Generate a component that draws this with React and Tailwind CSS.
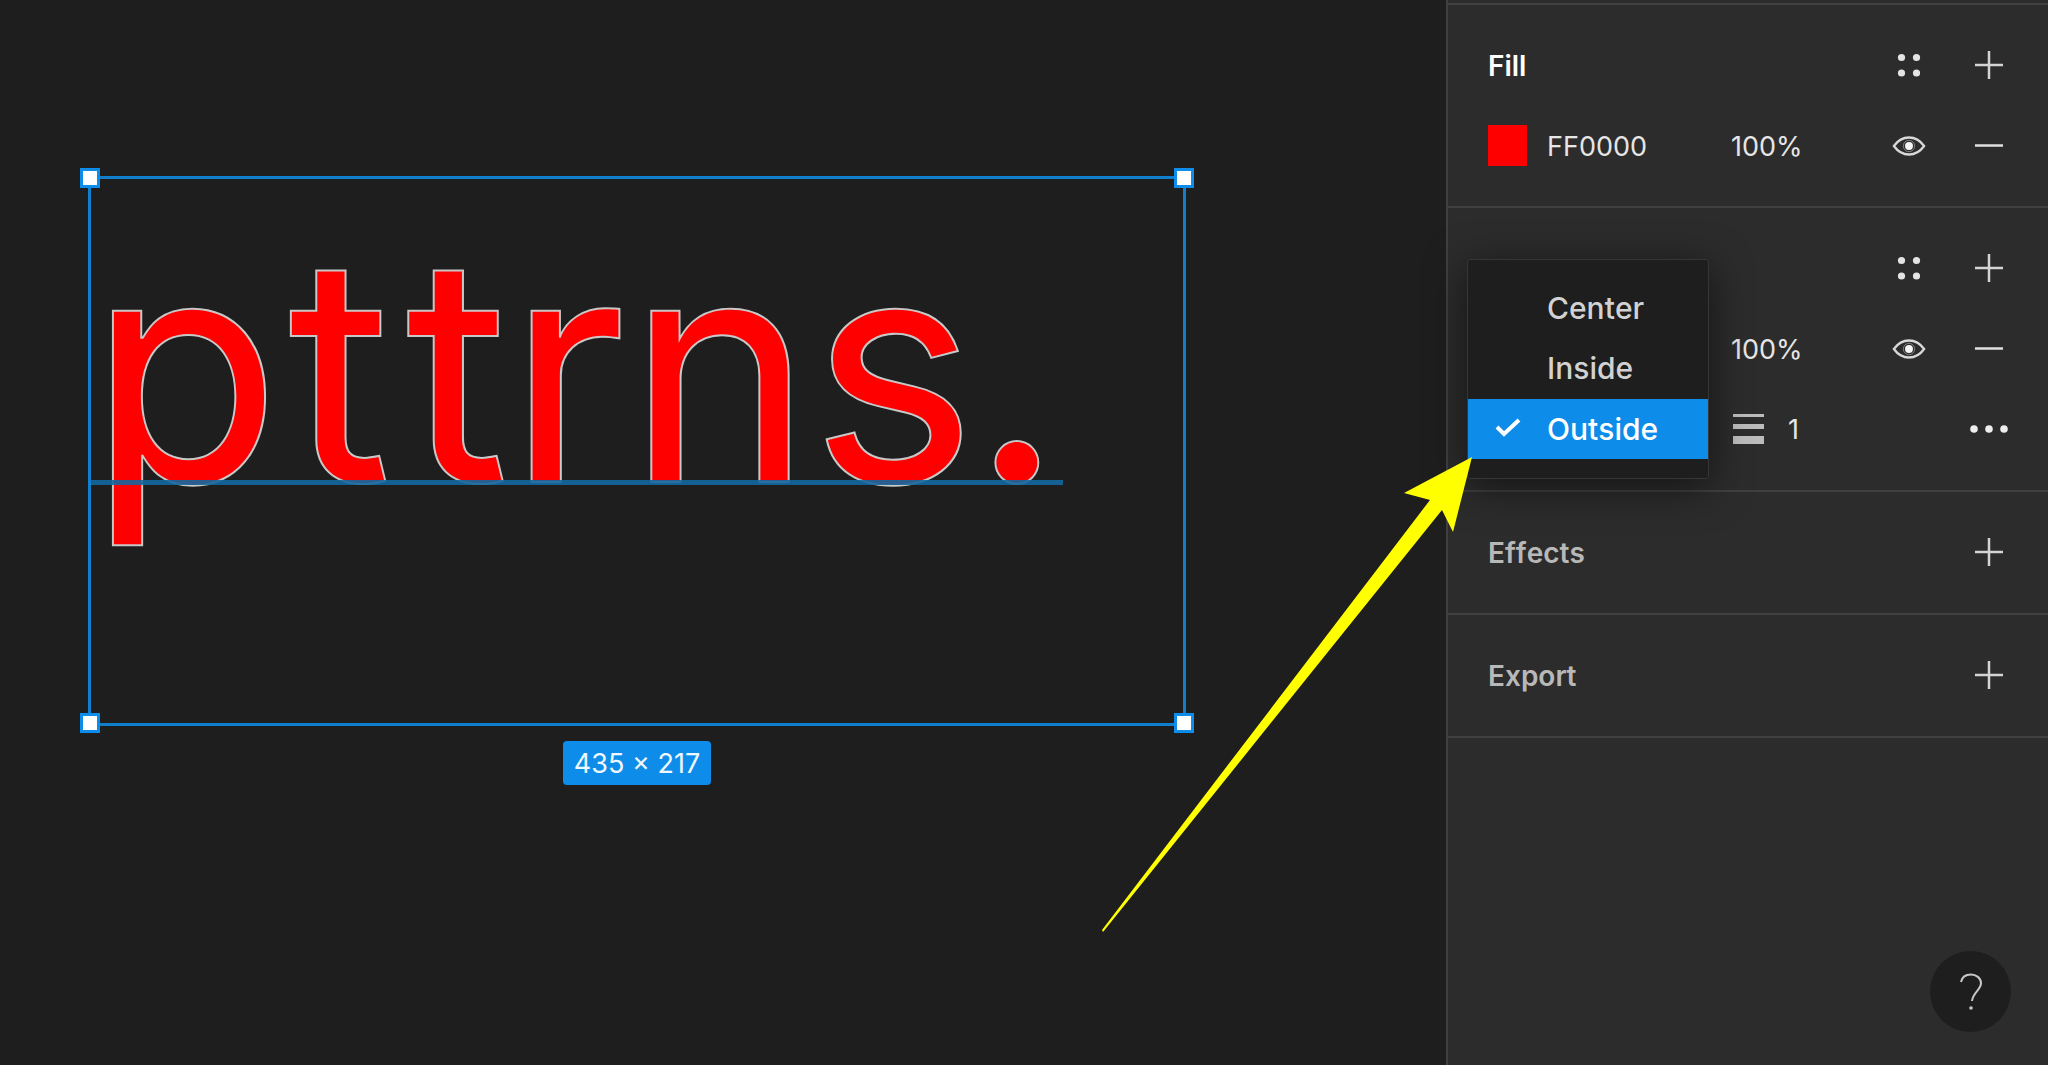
const rowGrid = 'grid grid-cols-[59px_184px_158px_40px_40px_40px] items-center';

function PlusIcon() {
  return (
    <svg width="30" height="30" viewBox="0 0 30 30" className="text-[#d4d4d4]">
      <path d="M15 1v28M1 15h28" stroke="currentColor" strokeWidth="2.5" fill="none" />
    </svg>
  );
}

function MinusIcon() {
  return (
    <svg width="30" height="30" viewBox="0 0 30 30" className="text-[#e0e0e0]">
      <path d="M1 14.5h28" stroke="currentColor" strokeWidth="2.5" fill="none" />
    </svg>
  );
}

function StylesIcon() {
  return (
    <svg width="24" height="24" viewBox="0 0 24 24" className="text-[#e4e4e4]">
      <circle cx="4.5" cy="4.5" r="3.6" fill="currentColor" />
      <circle cx="19.5" cy="4.5" r="3.6" fill="currentColor" />
      <circle cx="4.5" cy="20" r="3.6" fill="currentColor" />
      <circle cx="19.5" cy="20" r="3.6" fill="currentColor" />
    </svg>
  );
}

function EyeIcon() {
  return (
    <svg width="34" height="24" viewBox="0 0 36 24" className="text-[#d8d8d8]">
      <path d="M2 12C7 5 12 3 18 3s11 2 16 9c-5 7-10 9-16 9S7 19 2 12z" stroke="currentColor" strokeWidth="2.4" fill="none" />
      <circle cx="18" cy="12" r="6" stroke="currentColor" strokeWidth="1" fill="none" opacity="0.5" />
      <circle cx="18" cy="12" r="4.2" fill="#f5f5f5" />
    </svg>
  );
}

function SectionHeader({ label, labelClass }) {
  return (
    <div className="flex h-[80px] items-center pl-[40px] pr-[39px]">
      <span className={`flex-1 text-[28px] font-semibold ${labelClass}`}>{label}</span>
      <span className="flex w-[40px] justify-center"><StylesIcon /></span>
      <span className="w-[40px]" />
      <span className="flex w-[40px] justify-center"><PlusIcon /></span>
    </div>
  );
}

function CollapsedSection({ label }) {
  return (
    <section className="flex h-[123px] items-center border-b-2 border-[#404040] pl-[40px] pr-[39px]">
      <span className="flex-1 text-[28px] font-semibold text-[#b8b8b8]">{label}</span>
      <span className="flex w-[40px] -translate-y-px justify-center"><PlusIcon /></span>
    </section>
  );
}

function StrokeMenu() {
  return (
    <div className="absolute left-[19px] top-[259px] w-[242px] rounded-[3px] border border-[#363636] bg-[#1e1e1e] py-[19px] text-[30px] font-medium shadow-[0_8px_40px_rgba(0,0,0,0.55)]">
      <div className="flex h-[60px] items-center pb-[2px] pl-[79px] text-[#d2d2d2]">Center</div>
      <div className="flex h-[60px] items-center pb-[2px] pl-[79px] text-[#d2d2d2]">Inside</div>
      <div className="relative flex h-[60px] items-center bg-[#0d8ce9] pl-[79px] text-white">
        <svg width="26" height="20" viewBox="0 0 26 20" className="absolute left-[27px] top-[18px]">
          <path d="M2 10l7 7L24 3" stroke="#fff" strokeWidth="4" fill="none" />
        </svg>
        Outside
      </div>
    </div>
  );
}

function Handle({ className }) {
  return <div className={`absolute h-[20px] w-[20px] border-[3px] border-[#0d8ce9] bg-white ${className}`} />;
}

export default function App() {
  return (
    <div className="relative flex h-screen w-full overflow-hidden bg-[#1e1e1e] font-['Inter',sans-serif] [font-optical-sizing:none] [font-kerning:none]">
      <main className="relative flex-1">
        <span className="absolute left-[90px] top-[149px] whitespace-nowrap text-[310px] font-normal leading-[440px] text-[#ff0000] [-webkit-text-stroke:4px_#c8c8c8] [paint-order:stroke_fill]">
          <span className="tracking-[9px]">p</span>
          <span className="tracking-[16px]">t</span>
          <span className="tracking-[1px]">t</span>
          <span className="tracking-[3px]">r</span>
          n
          <span className="tracking-[-3px]">s</span>.
        </span>
        <div className="absolute left-[89px] top-[480px] h-[5px] w-[974px] bg-[#14679f]/90" />
        <div className="absolute left-[88px] top-[176px] h-[550px] w-[1098px] border-[3px] border-[#0f7fce]" />
        <Handle className="left-[80px] top-[168px]" />
        <Handle className="left-[1174px] top-[168px]" />
        <Handle className="left-[80px] top-[713px]" />
        <Handle className="left-[1174px] top-[713px]" />
        <div className="absolute left-[563px] top-[741px] flex h-[44px] w-[148px] items-center justify-center rounded-[4px] bg-[#0d8ce9] pt-[2px] text-[27px] text-[#f0f8ff]">
          435 × 217
        </div>
      </main>

      <aside className="relative h-full w-[602px] border-l-2 border-[#404040] bg-[#2c2c2c] text-[27px] text-[#e6e6e6]">
        <div className="h-[5px] border-b-2 border-[#404040]" />

        <section className="h-[203px] border-b-2 border-[#404040] pt-[20px]">
          <SectionHeader label="Fill" labelClass="pt-[2px] text-white" />
          <div className={`${rowGrid} h-[81px] pl-[40px]`}>
            <span className="h-[41px] w-[39px] bg-[#ff0000]" />
            <span className="pt-[3px]">FF0000</span>
            <span className="pt-[3px]">100%</span>
            <span className="flex justify-center"><EyeIcon /></span>
            <span />
            <span className="flex justify-center"><MinusIcon /></span>
          </div>
        </section>

        <section className="h-[284px] border-b-2 border-[#404040] pt-[20px]">
          <SectionHeader label="Stroke" labelClass="pt-[6px] text-[#b8b8b8]" />
          <div className={`${rowGrid} h-[81px] pl-[40px]`}>
            <span />
            <span />
            <span className="pt-[3px]">100%</span>
            <span className="flex justify-center"><EyeIcon /></span>
            <span />
            <span className="flex justify-center"><MinusIcon /></span>
          </div>
          <div className={`${rowGrid} h-[80px] pl-[40px]`}>
            <span />
            <span />
            <span className="flex items-center gap-[24px] pl-[2px]">
              <svg width="31" height="32" viewBox="0 0 31 32" className="text-[#bcbcbc]">
                <rect y="1" width="31" height="3" fill="currentColor" />
                <rect y="11" width="31" height="5" fill="currentColor" />
                <rect y="23" width="31" height="8" fill="currentColor" />
              </svg>
              <span className="pt-[2px]">1</span>
            </span>
            <span />
            <span />
            <span className="flex justify-center">
              <svg width="38" height="10" viewBox="0 0 38 10" className="text-[#eee]">
                <circle cx="4" cy="5" r="3.8" fill="currentColor" />
                <circle cx="19" cy="5" r="3.8" fill="currentColor" />
                <circle cx="34" cy="5" r="3.8" fill="currentColor" />
              </svg>
            </span>
          </div>
        </section>

        <CollapsedSection label="Effects" />
        <CollapsedSection label="Export" />

        <StrokeMenu />

        <button className="absolute left-[482px] top-[951px] flex h-[81px] w-[81px] items-center justify-center rounded-full bg-[#1e1e1e]">
          <svg width="24" height="38" viewBox="0 0 24 38" className="text-[#c8c8c8]">
            <path d="M2 9C3 4 7 1.500 12 1.500S22 5 22 10c0 7-8 9-9 18" stroke="currentColor" strokeWidth="2" fill="none" />
            <circle cx="12" cy="35" r="1.800" fill="currentColor" />
          </svg>
        </button>
      </aside>

      <svg className="pointer-events-none absolute inset-0" width="2048" height="1065" viewBox="0 0 2048 1065">
        <polygon points="1472,457 1453,532 1442,510 1103,932 1102,930 1430,500 1404,493" fill="#ffff00" />
      </svg>
    </div>
  );
}
